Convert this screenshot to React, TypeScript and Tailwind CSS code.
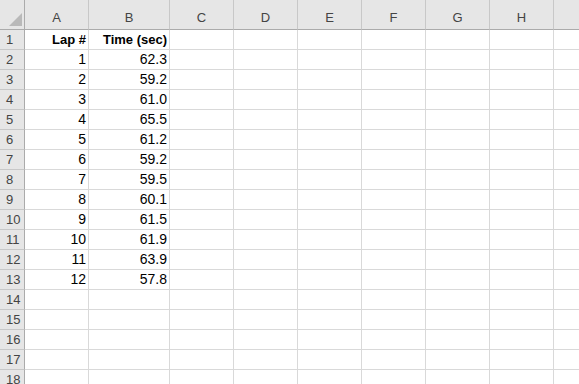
import React from "react";

const cols = ["A", "B", "C", "D", "E", "F", "G", "H", ""];
const widths = ["w-[64px]", "w-[81px]", "w-[64px]", "w-[64px]", "w-[64px]", "w-[64px]", "w-[64px]", "w-[64px]", "w-[64px]"];
const data: [string, string][] = [
  ["Lap #", "Time (sec)"],
  ["1", "62.3"],
  ["2", "59.2"],
  ["3", "61.0"],
  ["4", "65.5"],
  ["5", "61.2"],
  ["6", "59.2"],
  ["7", "59.5"],
  ["8", "60.1"],
  ["9", "61.5"],
  ["10", "61.9"],
  ["11", "63.9"],
  ["12", "57.8"],
];

export default function App() {
  const rows = Array.from({ length: 18 }, (_, i) => i + 1);
  return (
    <div
      className="w-[579px] h-[384px] overflow-hidden bg-white text-[14px]"
      style={{ fontFamily: "'Liberation Sans', Arial, sans-serif" }}
    >
      <div className="flex w-max">
        <div className="w-[25px] h-[30px] shrink-0 bg-[#e6e6e6] border-r border-b border-[#ababab] relative">
          <svg className="absolute left-[9px] top-[13px]" width="13" height="13" viewBox="0 0 13 13">
            <polygon points="13,0 13,13 0,13" fill="#b9b9b9" />
          </svg>
        </div>
        {cols.map((c, i) => (
          <div
            key={i}
            className={`${widths[i]} h-[30px] shrink-0 bg-[#e6e6e6] border-r border-b border-r-[#c8c8c8] border-b-[#ababab] flex items-center justify-center text-[#444] text-[13px] pt-[7px]`}
          >
            {c}
          </div>
        ))}
      </div>
      {rows.map((r) => {
        const d = data[r - 1];
        const bold = r === 1;
        return (
          <div key={r} className="flex w-max">
            <div className="w-[25px] h-[20px] shrink-0 bg-[#e6e6e6] border-r border-b border-r-[#ababab] border-b-[#c8c8c8] flex items-center pl-[6px] text-[#444] text-[13px]">
              {r}
            </div>
            {cols.map((c, i) => (
              <div
                key={i}
                className={`${widths[i]} h-[20px] shrink-0 border-r border-b border-[#d9d9d9] flex items-center justify-end pr-[2px] text-black ${bold ? "font-bold text-[13px]" : ""}`}
              >
                {d && i < 2 ? d[i] : ""}
              </div>
            ))}
          </div>
        );
      })}
    </div>
  );
}
